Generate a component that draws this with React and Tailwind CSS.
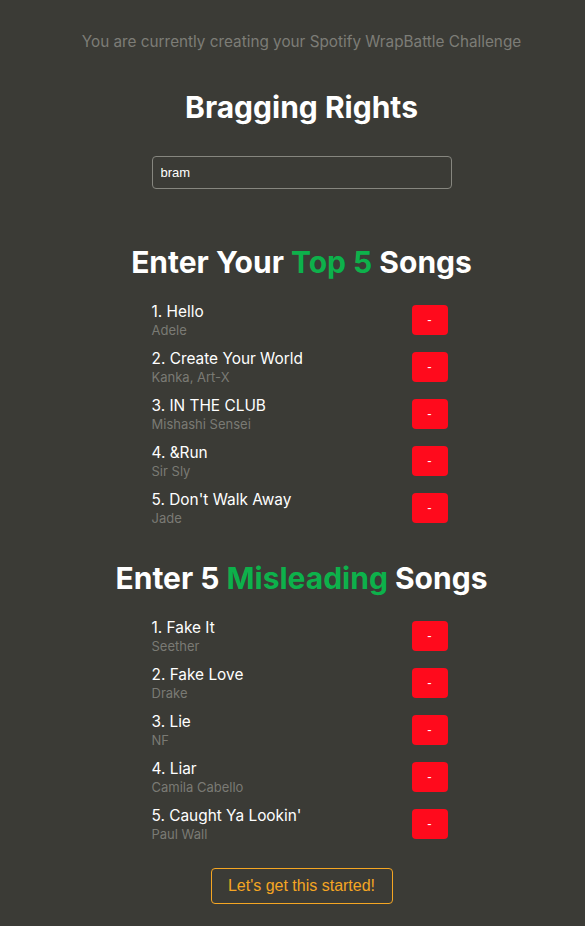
import React from "react";

const top = [
  ["Hello", "Adele"],
  ["Create Your World", "Kanka, Art-X"],
  ["IN THE CLUB", "Mishashi Sensei"],
  ["&Run", "Sir Sly"],
  ["Don't Walk Away", "Jade"],
];
const mis = [
  ["Fake It", "Seether"],
  ["Fake Love", "Drake"],
  ["Lie", "NF"],
  ["Liar", "Camila Cabello"],
  ["Caught Ya Lookin'", "Paul Wall"],
];

function List({ items }) {
  return (
    <div className="w-[300px]">
      <div className="w-[296px] flex flex-col gap-[11px]">
        {items.map(([t, a], i) => (
          <div key={i} className="flex items-center justify-between h-[36px]">
            <div className="flex flex-col pt-[1px]">
              <div className="text-[15.4px] leading-[20px] text-white">{i + 1}. {t}</div>
              <div className="text-[13px] leading-[17px] text-[#7a7a74]">{a}</div>
            </div>
            <button className="w-[36px] h-[30px] rounded-[4px] bg-[#ff0a1c] text-white text-[13px] font-['Liberation_Sans',sans-serif] flex items-center justify-center">-</button>
          </div>
        ))}
      </div>
    </div>
  );
}

export default function App() {
  return (
    <div className="h-[926px] overflow-hidden bg-[#3b3b36] font-['Inter',sans-serif] flex flex-col items-center pt-[32px] pl-[18px]">
      <p className="text-[15.3px] leading-[20px] text-[#7d7d77]">You are currently creating your Spotify WrapBattle Challenge</p>
      <h1 className="mt-[37px] text-[30px] leading-[36px] font-bold text-white">Bragging Rights</h1>
      <input
        defaultValue="bram"
        className="mt-[31px] w-[300px] h-[33px] rounded-[4px] border border-[#86867f] bg-transparent px-[8px] text-[13px] text-white font-['Liberation_Sans',sans-serif] outline-none"
      />
      <h2 className="mt-[55px] text-[30px] leading-[36px] font-bold text-white">
        Enter Your <span className="text-[#0db14b]">Top 5</span> Songs
      </h2>
      <div className="mt-[22px]">
        <List items={top} />
      </div>
      <h2 className="mt-[34px] text-[30px] leading-[36px] font-bold text-white">
        Enter 5 <span className="text-[#0db14b]">Misleading</span> Songs
      </h2>
      <div className="mt-[22px]">
        <List items={mis} />
      </div>
      <button className="mt-[26px] w-[182px] h-[36px] rounded-[4px] border border-[#f5a623] text-[#f5a623] text-[16px] font-['Liberation_Sans',sans-serif]">
        Let's get this started!
      </button>
    </div>
  );
}
